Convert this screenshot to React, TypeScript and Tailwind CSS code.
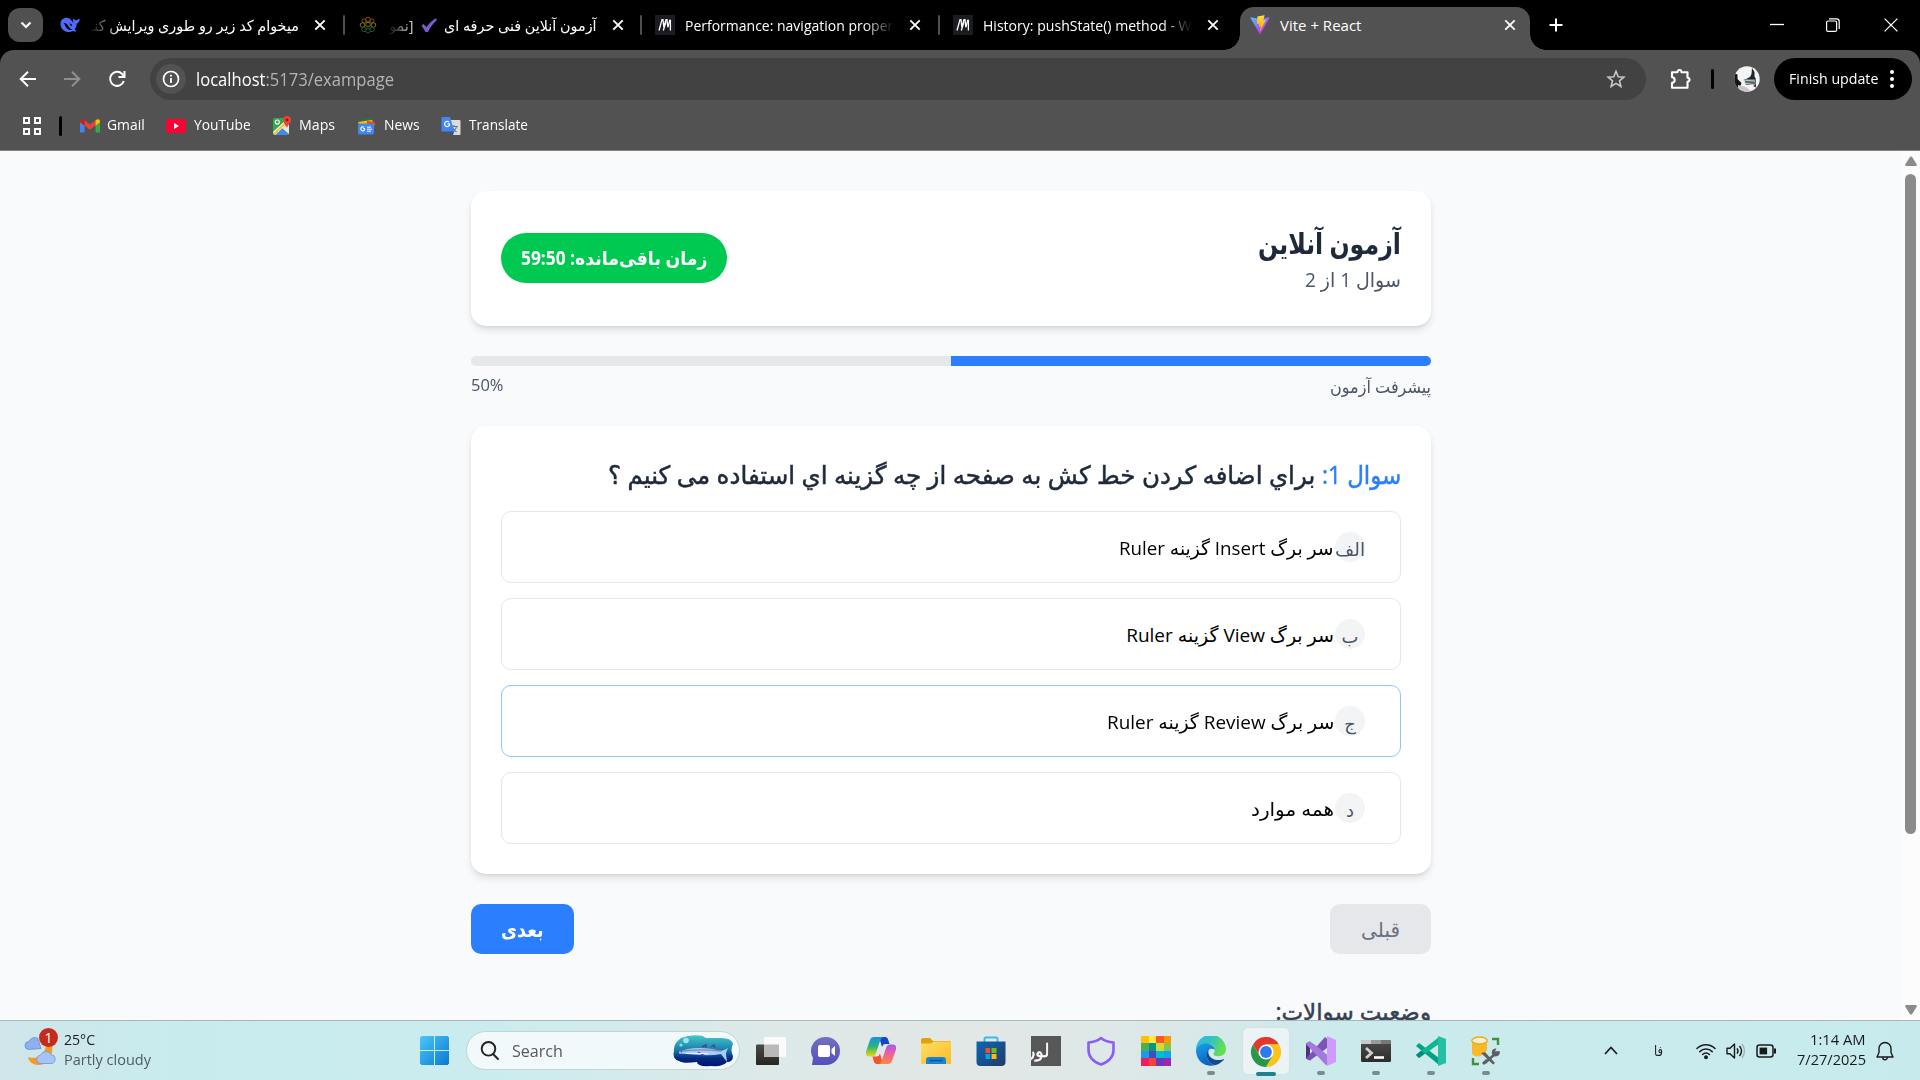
import { useLayoutEffect, useRef, type ReactNode } from "react";

/** Single line of text that is condensed or stretched to the width of its box. */
function Fit({ className = "", children, rtl = false }: { className?: string; children: ReactNode; rtl?: boolean }) {
  const outer = useRef<HTMLSpanElement>(null);
  const inner = useRef<HTMLSpanElement>(null);
  useLayoutEffect(() => {
    if (!outer.current || !inner.current) return;
    const ratio = outer.current.offsetWidth / inner.current.offsetWidth;
    inner.current.style.transform = `scaleX(${ratio})`;
  });
  return (
    <span ref={outer} dir={rtl ? "rtl" : "ltr"} className={`flex shrink-0 justify-start ${className}`}>
      <span ref={inner} className={`shrink-0 whitespace-nowrap ${rtl ? "origin-right" : "origin-left"}`}>
        {children}
      </span>
    </span>
  );
}

const Close = ({ className = "" }: { className?: string }) => (
  <svg viewBox="0 0 14 14" className={`h-3.5 w-3.5 shrink-0 ${className}`} stroke="#fff" strokeWidth="1.9" fill="none">
    <path d="M2.3 2.3l9.4 9.4M11.7 2.3l-9.4 9.4" />
  </svg>
);

const DeepSeek = () => (
  <svg viewBox="0 0 20 20" className="h-5 w-5 shrink-0">
    <path d="M.5 9C.5 5 3.400 2.800 6.500 2.800c2 0 3.200.7 4.600 2.300 1.100 1.300 1.700 2.300 2.600 2.800-.8-1.700-.9-3.300-.2-4.700.8 1.500 1.700 2.100 2.800 2 1.100-.1 2-.9 3.300-1.700.3 2.500-.9 4.500-3 5.200.1 2.300-.7 4.100-2 5.600l2 1.700c-1.300.8-2.700.6-3.900.1C8.300 18.600.5 16 .5 9z" fill="#4d6bfe" />
    <path d="M3.500 8c2.300-.3 3.700 1.100 4.800 2.900 1.100 1.900 2 2.900 3.800 3.800-2.700.8-4.900-.5-6-2.400C5.300 10.800 4.800 9.200 3.500 8z" fill="#000" />
    <path d="M9.600 8.600c1.400-.2 2.300.8 2.500 2.100-.8.300-1.200 0-1.700-.5" fill="#000" />
  </svg>
);

const Knot = () => (
  <svg viewBox="0 0 18 18" className="h-[18px] w-5 shrink-0" fill="none" strokeWidth="1">
    <g stroke="#94500f"><circle cx="9" cy="3.500" r="2.300" /><circle cx="5" cy="5" r="2.100" /><circle cx="13" cy="5" r="2.100" /></g>
    <g stroke="#77731c"><circle cx="3.500" cy="9" r="2.300" /><circle cx="14.500" cy="9" r="2.300" /><circle cx="9" cy="8.500" r="2.300" /></g>
    <g stroke="#115c30"><circle cx="5" cy="13.300" r="2.300" /><circle cx="13" cy="13.300" r="2.300" /><circle cx="9" cy="14.700" r="2.300" /></g>
  </svg>
);

const Mdn = () => (
  <svg viewBox="0 0 20 20" className="h-5 w-5 shrink-0">
    <rect width="20" height="20" fill="#1b1b22" />
    <path d="M4 15.500L7 4.700h1l.8 7.500L11 4.700h1l.8 7.500L15 4.700" stroke="#fff" strokeWidth="1.300" fill="none" />
    <path d="M8.300 15.500l2.700-9M15.400 4.700v10.800" stroke="#fff" strokeWidth="1.300" />
  </svg>
);

const Vite = () => (
  <svg viewBox="0 0 410 404" className="h-5 w-5 shrink-0">
    <defs>
      <linearGradient id="v1" x1="6" y1="33" x2="235" y2="344" gradientUnits="userSpaceOnUse"><stop stopColor="#41D1FF" /><stop offset="1" stopColor="#BD34FE" /></linearGradient>
      <linearGradient id="v2" x1="194" y1="9" x2="236" y2="293" gradientUnits="userSpaceOnUse"><stop stopColor="#FFEA83" /><stop offset=".1" stopColor="#FFDD35" /><stop offset="1" stopColor="#FFA800" /></linearGradient>
    </defs>
    <path d="M399.641 59.525L215.643 388.545C211.844 395.338 202.084 395.378 198.228 388.618L10.582 59.556C6.381 52.190 12.680 43.267 21.028 44.759L205.223 77.682C206.398 77.892 207.601 77.890 208.776 77.676L389.119 44.806C397.439 43.289 403.768 52.143 399.641 59.525Z" fill="url(#v1)" />
    <path d="M292.965 1.574L156.801 28.255C154.563 28.694 152.906 30.590 152.771 32.866L144.395 174.330C144.198 177.662 147.258 180.248 150.510 179.498L188.420 170.749C191.967 169.931 195.172 173.055 194.443 176.622L183.180 231.775C182.422 235.487 185.907 238.661 189.532 237.560L212.947 230.446C216.577 229.344 220.065 232.527 219.297 236.242L201.398 322.875C200.278 328.294 207.486 331.249 210.492 326.603L212.500 323.500L323.454 102.072C325.312 98.365 322.108 94.137 318.036 94.923L279.014 102.454C275.347 103.161 272.227 99.746 273.262 96.158L298.731 7.867C299.767 4.273 296.636.855 292.965 1.574Z" fill="url(#v2)" />
  </svg>
);

function Tab({ icon, children, divider = true }: { icon: ReactNode; children: ReactNode; divider?: boolean }) {
  return (
    <div className="flex h-[50px] w-[297.500px] shrink-0 items-center pl-3.5">
      {icon}
      {children}
      <Close className="ml-3.5" />
      {divider && <span className="-mr-px ml-auto h-5 w-0.5 rounded bg-[#4f4f4f]" />}
    </div>
  );
}

function TabStrip() {
  return (
    <div className="flex h-[50px] items-center bg-black pl-2 text-[15px] text-white">
      <div className="flex h-[34px] w-[35px] shrink-0 items-center justify-center rounded-xl bg-[#505050]">
        <svg viewBox="0 0 12 8" className="h-2 w-3" fill="none" stroke="#fff" strokeWidth="2.200"><path d="M1.500 1.500L6 6l4.500-4.500" /></svg>
      </div>
      <div className="w-[3px]" />
      <Tab icon={<DeepSeek />}>
        <span className="ml-[10px] flex w-[209px] justify-end overflow-hidden [mask-image:linear-gradient(to_right,transparent,black_30px)]">
          <Fit rtl className="w-[209px]">میخوام کد زیر رو طوری ویرایش کنـ</Fit>
        </span>
      </Tab>
      <Tab icon={<Knot />}>
        <span dir="rtl" className="ml-[10px] flex w-[209px] items-center gap-[7px] overflow-hidden [mask-image:linear-gradient(to_right,transparent,black_30px)]">
          <Fit rtl className="w-[153px]">آزمون آنلاین فنی حرفه ای</Fit>
          <svg viewBox="0 0 16 16" className="h-4 w-4 shrink-0"><path d="M.5 8.500l2-1.600 3 3.300C8.500 6 11 3.500 15 1.300l.9 1.800C12.500 6 9.500 10 7 15H4.600z" fill="#7e5bd0" /></svg>
          <Fit rtl className="w-[25px]">[نمو</Fit>
        </span>
      </Tab>
      <Tab icon={<Mdn />}>
        <span className="ml-[10px] w-[209px] [mask-image:linear-gradient(to_left,transparent,black_30px)]">
          <Fit className="w-[208px]">Performance: navigation proper</Fit>
        </span>
      </Tab>
      <Tab divider={false} icon={<Mdn />}>
        <span className="ml-[10px] w-[209px] [mask-image:linear-gradient(to_left,transparent,black_30px)]">
          <Fit className="w-[209px]">History: pushState() method - W</Fit>
        </span>
      </Tab>
      <div className="-ml-3 flex h-[50px] shrink-0 items-end">
        <div className="h-4 w-4 bg-[radial-gradient(circle_at_0_0,#000_15.500px,#525252_16px)]" />
        <div className="flex h-[43px] w-[290px] items-start rounded-t-[14px] bg-[#525252] pl-2.5">
          <div className="flex h-9 w-full items-center">
            <Vite />
            <Fit className="ml-2.5 w-[81px]">Vite + React</Fit>
            <Close className="ml-[142px]" />
          </div>
        </div>
        <div className="h-4 w-4 bg-[radial-gradient(circle_at_100%_0,#000_15.500px,#525252_16px)]" />
      </div>
      <svg viewBox="0 0 14 14" className="ml-[3px] h-3.5 w-3.5 shrink-0" stroke="#fff" strokeWidth="2"><path d="M7 .5v13M.5 7h13" /></svg>
      <div className="ml-auto flex items-center pr-[22px]">
        <svg viewBox="0 0 14 14" className="h-3.5 w-3.5" stroke="#fff"><path d="M0 6.500h14" strokeWidth="1.300" /></svg>
        <svg viewBox="0 0 14 14" className="ml-[42px] h-3.5 w-3.5" stroke="#fff" fill="none"><rect x=".6" y="3" width="10" height="10.400" rx="1.500" strokeWidth="1.200" /><path d="M3 .8h7.500a2.700 2.700 0 0 1 2.700 2.700V11" strokeWidth="1.200" /></svg>
        <svg viewBox="0 0 14 14" className="ml-11 h-3.5 w-3.5" stroke="#fff"><path d="M.6.6l12.800 12.800M13.400.6L.6 13.400" strokeWidth="1.300" /></svg>
      </div>
    </div>
  );
}

function Avatar() {
  return (
    <svg viewBox="0 0 26 26" className="ml-5 h-[26px] w-[26px] shrink-0">
      <defs><clipPath id="av"><circle cx="13" cy="13" r="12.700" /></clipPath></defs>
      <g clipPath="url(#av)">
        <rect width="26" height="26" fill="#f4f4f4" />
        <path d="M0 7l3.500 1.500V13l4 4-2.500 7H0z" fill="#151515" />
        <path d="M18 2l2.500 4v4.500l1.500 2.500H12l4-2 1.500-3z" fill="#20262b" />
        <path d="M10 13h12v6H12z" fill="#5e6b6c" />
        <path d="M9 14l12 1M10 17l11 2" stroke="#c3d0d0" strokeWidth="1" />
        <path d="M4 19l8 2 6 5H4z" fill="#c9c3cb" />
        <path d="M19 20l3-1.500v3z" fill="#2a2a2a" />
      </g>
    </svg>
  );
}

function Toolbar() {
  return (
    <div className="flex h-[58px] items-center rounded-t-[14px] bg-[#525252] pl-[19px] text-white">
      <svg viewBox="0 0 18 18" className="h-[18px] w-[18px]" fill="none" stroke="#fff" strokeWidth="2"><path d="M17 9H2M9 1.700L1.700 9 9 16.300" /></svg>
      <svg viewBox="0 0 18 18" className="ml-[26px] h-[18px] w-[18px]" fill="none" stroke="#8f8f8f" strokeWidth="2"><path d="M1 9h15M9 1.700L16.300 9 9 16.300" /></svg>
      <svg viewBox="0 0 18 18" className="ml-[27px] h-[18px] w-[18px]" fill="none" stroke="#fff" strokeWidth="2"><path d="M15.800 11a7 7 0 1 1-1.600-7l2.300 2.500" /><path d="M16.500 1v6h-6" /></svg>
      <div className="ml-6 flex h-[42px] w-[1496px] shrink-0 items-center rounded-full bg-[#424242] pl-1.5">
        <span className="flex h-[30px] w-[30px] items-center justify-center rounded-full bg-[#525252]">
          <svg viewBox="0 0 18 18" className="h-[18px] w-[18px]" fill="none" stroke="#fff"><circle cx="9" cy="9" r="7.500" strokeWidth="1.700" /><path d="M9 8v5M9 4.800v1.700" strokeWidth="1.800" /></svg>
        </span>
        <Fit className="ml-2.5 w-[198px] text-[18px]">localhost<span className="text-[#b4b4b4]">:5173/exampage</span></Fit>
        <svg viewBox="0 0 20 20" className="mr-5 ml-auto h-5 w-5" fill="none" stroke="#c7c7c7" strokeWidth="1.600" strokeLinejoin="miter"><path d="M10 2.300l2.200 5.400 5.700.4-4.400 3.700 1.400 5.700-4.900-3.100-4.900 3.100 1.400-5.700-4.400-3.700 5.700-.4z" /></svg>
      </div>
      <svg viewBox="0 0 22 22" className="ml-6 h-[22px] w-[22px] shrink-0" fill="none" stroke="#fff" strokeWidth="2.100" strokeLinejoin="round"><path d="M2 4.200h5.500c.2-3 3.800-3 4 0h6V9.800c2.700.3 2.700 3.600 0 3.900v6.100H2v-5c3.600-.2 3.600-5.300 0-5.500z" /></svg>
      <span className="ml-[19px] h-5 w-[3px] shrink-0 rounded bg-black" />
      <Avatar />
      <div className="ml-3.5 flex h-[42px] w-[138px] shrink-0 items-center rounded-full bg-black pl-[15px]">
        <Fit className="w-[89px] pb-0.5 text-[15px]">Finish update</Fit>
        <svg viewBox="0 0 6 20" className="ml-[11px] h-5 w-1.5" fill="#fff"><circle cx="3" cy="3" r="2" /><circle cx="3" cy="10" r="2" /><circle cx="3" cy="17" r="2" /></svg>
      </div>
    </div>
  );
}

function Bookmarks() {
  return (
    <div className="flex h-[43px] items-center border-b border-[#858282] bg-[#525252] pb-[7px] pl-[23px] text-[15px] text-white">
      <svg viewBox="0 0 18 18" className="h-[18px] w-[18px]" fill="none" stroke="#fff" strokeWidth="2"><rect x="1" y="1" width="5" height="5" /><rect x="12" y="1" width="5" height="5" /><rect x="1" y="12" width="5" height="5" /><rect x="12" y="12" width="5" height="5" /></svg>
      <span className="ml-[18px] h-5 w-[3px] rounded bg-black" />
      <svg viewBox="0 0 20 16" className="ml-[18px] h-4 w-5">
        <path d="M0 2v12.500h4.500V7z" fill="#4285f4" /><path d="M20 2v12.500h-4.500V7z" fill="#34a853" />
        <path d="M4.500 7.500V2.300L10 6.500l5.500-4.200v5.200L10 11.700z" fill="#ea4335" />
        <path d="M15.500 2.300C17.500.7 20 .8 20 3.500v.8l-4.500 3.400z" fill="#fbbc04" /><path d="M4.500 2.300C2.500.7 0 .8 0 3.500v.8l4.500 3.400z" fill="#c5221f" />
      </svg>
      <Fit className="ml-[7px] w-[38px] pb-0.5">Gmail</Fit>
      <svg viewBox="0 0 20 14" className="ml-[21px] h-3.5 w-5"><rect width="20" height="14" rx="3" fill="#f03" /><path d="M8 4v6l5-3z" fill="#fff" /></svg>
      <Fit className="ml-2 w-[57px] pb-0.5">YouTube</Fit>
      <svg viewBox="0 0 18 20" className="ml-[22px] h-5 w-[18px]">
        <rect x="0" y="2" width="16" height="17" rx="1.500" fill="#34a853" /><path d="M16 8v10l-7-6z" fill="#e8e8e8" /><path d="M2 19L8.500 12l7 7z" fill="#4285f4" />
        <path d="M0 16L14 3l2 3L2 19z" fill="#fff" /><path d="M0 17.500L13 5l1.500 1.500L1.500 19z" fill="#fbc02d" /><circle cx="4.300" cy="6" r="2" fill="none" stroke="#fff" strokeWidth="1.100" />
        <path d="M14 0a4 4 0 0 1 4 4c0 3-3 4.500-4 8-1-3.500-4-5-4-8a4 4 0 0 1 4-4z" fill="#ea4335" /><circle cx="14" cy="4" r="1.400" fill="#8c1b12" />
      </svg>
      <Fit className="ml-2 w-[36px] pb-0.5">Maps</Fit>
      <svg viewBox="0 0 18 18" className="ml-[22px] h-[18px] w-[18px]">
        <path d="M4 3l10-2v8H4z" fill="#188038" /><path d="M1 5l14-2 3 5-14 4z" fill="#fbbc04" /><path d="M10 4l8 1-1 6-7-1z" fill="#ea4335" />
        <rect x="1" y="6.500" width="16" height="11" rx="1.500" fill="#4285f4" /><path d="M8 11.500H6.200M7.800 12a2 2 0 1 1-.7-1.700" stroke="#fff" strokeWidth="1.100" fill="none" /><path d="M10 10.200h4M10 12.200h5M10 14.200h4" stroke="#fff" strokeWidth="1" />
      </svg>
      <Fit className="ml-[9px] w-[36px] pb-0.5">News</Fit>
      <svg viewBox="0 0 20 20" className="ml-[21px] h-5 w-5">
        <path d="M7 4h11.500a1 1 0 0 1 1 1v13a1 1 0 0 1-1 1h-6z" fill="#dcdcdc" /><path d="M9 10.500h8M13 9v1.500M15.500 10.500c-.5 3-2.500 4.500-4.500 5.500M11.500 12l4 4" stroke="#607d8b" strokeWidth="1.100" fill="none" />
        <path d="M1.500 1H9l4.500 14.500H1.500a1 1 0 0 1-1-1V2a1 1 0 0 1 1-1z" fill="#4285f4" /><path d="M9.500 15.500h4l-1.800 3.300z" fill="#1a56c4" /><path d="M9 7.800H6.500M8.800 8a2.600 2.600 0 1 1-.8-1.900" stroke="#fff" strokeWidth="1.200" fill="none" />
      </svg>
      <Fit className="ml-2 w-[59px] pb-0.5">Translate</Fit>
    </div>
  );
}

function Option({ mark, active = false, children }: { mark: string; active?: boolean; children: ReactNode }) {
  return (
    <div dir="rtl" className={`flex h-[72px] items-center rounded-[10px] border pr-[35px] text-[19px] ${active ? "border-[#8ec5ff]" : "border-gray-200"}`}>
      <span className="flex h-[30px] w-[30px] items-center justify-center rounded-full bg-gray-100 pt-1 text-[18px] text-gray-600">
        {mark === "الف" ? <Fit rtl className="w-[30px]">{mark}</Fit> : mark}
      </span>
      <span className="mr-px pt-[3px] text-black">{children}</span>
    </div>
  );
}

function Exam() {
  return (
    <div className="flex h-[869px] overflow-hidden bg-[#f9fafb]">
      <main className="ml-[471px] w-[960px] shrink-0 pt-10">
        <section dir="rtl" className="flex h-[135px] items-center justify-between rounded-[15px] bg-white px-[30px] shadow-[0_5px_8px_-1px_rgba(0,0,0,0.1),0_2px_5px_-2px_rgba(0,0,0,0.12)]">
          <div>
            <h1 className="flex h-[43px] items-center text-[29px] font-bold text-gray-800"><Fit rtl className="w-[143px]">آزمون آنلاین</Fit></h1>
            <p className="flex h-[32px] items-center text-[20px] text-gray-600"><Fit rtl className="w-[96px]">سوال 1 از 2</Fit></p>
          </div>
          <div className="mb-0.5 flex h-[50px] w-[226px] items-center justify-center rounded-full bg-[#00c951] pt-0.5 text-[19px] font-bold text-white">
            <Fit rtl className="w-[186px]">زمان باقی‌مانده: 59:50</Fit>
          </div>
        </section>

        <div dir="rtl" className="mt-[30px] h-2.5 overflow-hidden rounded-full bg-gray-200"><div className="h-full w-1/2 bg-[#2b7fff]" /></div>
        <div dir="rtl" className="mt-[5px] flex h-[30px] items-center justify-between text-gray-600">
          <Fit rtl className="w-[101px] text-[17.500px]">پیشرفت آزمون</Fit>
          <Fit className="w-[33px] pb-0.5 text-[17px]">50%</Fit>
        </div>

        <section dir="rtl" className="mt-[25px] h-[448px] rounded-[15px] bg-white px-[30px] shadow-[0_5px_8px_-1px_rgba(0,0,0,0.1),0_2px_5px_-2px_rgba(0,0,0,0.12)]">
          <h2 className="flex h-[85px] items-center pt-[13px] text-[25px] font-medium text-gray-800 [-webkit-text-stroke:0.5px]">
            <Fit rtl className="w-[79px] text-[#2b7fff]">سوال 1:</Fit>
            <Fit rtl className="mr-[7px] w-[707px]">براي اضافه کردن خط کش به صفحه از چه گزينه اي استفاده می کنیم ؟</Fit>
          </h2>
          <div className="flex flex-col gap-[15px]">
            <Option mark="الف"><Fit rtl className="w-[215px]">سر برگ Insert گزینه Ruler</Fit></Option>
            <Option mark="ب"><Fit rtl className="w-[208px]">سر برگ View گزینه Ruler</Fit></Option>
            <Option mark="ج" active><Fit rtl className="w-[227px]">سر برگ Review گزینه Ruler</Fit></Option>
            <Option mark="د"><Fit rtl className="w-[83px]">همه موارد</Fit></Option>
          </div>
        </section>

        <div dir="rtl" className="mt-[30px] flex justify-between text-[20px]">
          <button className="flex h-[50px] w-[101px] items-center justify-center rounded-[10px] bg-gray-200 pt-0.5 text-gray-500"><Fit rtl className="w-[39px]">قبلی</Fit></button>
          <button className="flex h-[50px] w-[103px] items-center justify-center rounded-[10px] bg-[#2b7fff] pt-0.5 font-bold text-white"><Fit rtl className="w-[43px]">بعدی</Fit></button>
        </div>
        <h3 dir="rtl" className="mt-[40px] text-[23px] font-medium text-gray-700 [-webkit-text-stroke:0.5px]"><Fit rtl className="w-[156px]">وضعیت سوالات:</Fit></h3>
      </main>
      <div className="ml-auto flex w-[19px] shrink-0 flex-col items-center bg-[#fcfcfc] py-[5px]">
        <svg viewBox="0 0 12 10" className="h-2.5 w-3" fill="#8b8b8b"><path d="M5 .8Q6 0 7 .8L11.800 8.500Q12 10 10.800 10H1.200Q0 10 .2 8.500z" /></svg>
        <div className="mt-2 h-[660px] w-[11px] rounded-full bg-[#8b8b8b]" />
        <svg viewBox="0 0 12 10" className="mt-auto h-2.5 w-3" fill="#8b8b8b"><path d="M5 9.200Q6 10 7 9.200L11.800 1.500Q12 0 10.800 0H1.200Q0 0 .2 1.500z" /></svg>
      </div>
    </div>
  );
}

const mosaic = ["#ffc107", "#ffeb3b", "#ff5722", "#ff9800", "#4caf50", "#009688", "#cddc39", "#8bc34a", "#2196f3", "#3f51b5", "#00bcd4", "#03a9f4", "#e91e63", "#f44336", "#673ab7", "#9c27b0"];

function TaskIcon({ children, state = "none" }: { children: ReactNode; state?: "none" | "open" | "focus" }) {
  return (
    <div className={`flex h-12 w-12 shrink-0 flex-col items-center rounded-md pt-[9px] ${state === "focus" ? "border border-[#d5e2e3] bg-[#eaf4f6] pt-2" : ""}`}>
      <div className="h-[30px] w-[30px]">{children}</div>
      {state === "open" && <span className="mt-[5px] h-1 w-2 rounded-full bg-[#7b8c90]" />}
      {state === "focus" && <span className="mt-[5px] h-1 w-5 shrink-0 rounded-full bg-[#21808f]" />}
    </div>
  );
}

function Taskbar() {
  return (
    <div className="flex h-[60px] items-center border-t border-[#a6b8bb] bg-[linear-gradient(90deg,#cfe5e9_0px,#c8ecee_180px,#cbecee_500px,#dce9e9_740px,#e2e8e6_960px,#dce8e8_1160px,#cbeaec_1340px,#c7ebed_1920px)] pl-6 text-[#1b1b1b]">
      <div className="relative h-[50px] w-[35px] shrink-0">
        <svg viewBox="0 0 35 50" className="h-[50px] w-[35px]">
          <path d="M5 23.500a4 4 0 0 1 0-8 6 6 0 0 1 9-3l3 10z" fill="#8db0ee" stroke="#5d86d6" strokeWidth=".7" />
          <path d="M28 18c2 9-3 21-13 21-6 0-10-3-11-8 9 3 17-2 18-12z" fill="#f59a23" />
          <path d="M16 37.500a4.200 4.200 0 0 1 .5-8.300 6 6 0 0 1 11-.2c5 0 5 8.500-.3 8.500z" fill="#a8c4f6" stroke="#6e92dd" strokeWidth=".8" />
        </svg>
        <span className="absolute top-[2px] left-[15px] flex h-[19px] w-[19px] items-center justify-center rounded-full bg-[#c42b1c] text-[14px] text-white">1</span>
      </div>
      <div className="mb-1 ml-[5px] text-[15px] leading-5">
        <Fit className="w-[31px]">25°C</Fit>
        <Fit className="w-[87px] text-[#4f5c5e]">Partly cloudy</Fit>
      </div>

      <svg viewBox="0 0 29 29" className="ml-[269px] h-[29px] w-[29px] shrink-0">
        <defs><linearGradient id="win" x1="0" y1="0" x2="1" y2="1" gradientUnits="objectBoundingBox"><stop stopColor="#4cc7fb" /><stop offset="1" stopColor="#0a78d4" /></linearGradient></defs>
        <path d="M1.500 0H14v14H0V1.500zM15 0h12.500L29 1.500V14H15zM0 15h14v14H1.500L0 27.500zM15 15h14v12.500L27.500 29H15z" fill="url(#win)" />
      </svg>
      <div className="ml-[17px] flex h-[39px] w-[274px] shrink-0 items-center rounded-full border border-[#c4d3d5] bg-[#f1f9fa] pl-[13px]">
        <svg viewBox="0 0 19 19" className="h-[19px] w-[19px]" fill="none" stroke="#222" strokeWidth="1.900" strokeLinecap="round"><circle cx="8.500" cy="7.800" r="6.800" /><path d="M13 13l5 5" /></svg>
        <Fit className="ml-[13px] w-[51px] text-[17px] text-[#57595a]">Search</Fit>
        <svg viewBox="0 0 61 32" className="mr-[5px] ml-auto h-8 w-[61px]">
          <defs><linearGradient id="sea" x1="0" y1="0" x2="0" y2="1"><stop stopColor="#45c8ce" /><stop offset=".45" stopColor="#1b82ad" /><stop offset=".75" stopColor="#04287f" /><stop offset="1" stopColor="#02176e" /></linearGradient></defs>
          <path d="M8 3Q18-1 30 1q1 2 6 2h12q11 0 12 6-3 6 0 12 0 6-6 6-4 5-16 4-14 1-14-4-14 2-18-1Q-1 24 1 16q-1-7 7-13z" fill="url(#sea)" />
          <circle cx="13" cy="5.500" r="2.800" fill="#9be7ec" /><circle cx="8" cy="10" r="1.600" fill="#8adfe6" />
          <path d="M6 17q8-4 20-4t22 3q4-1 7-3-2 4-2 6l1 8-6-8q-10 2-20 1t-22-1.500z" fill="#a9cdf0" /><path d="M6 16.500q18-3 42-.5" stroke="#7f86c8" strokeWidth="1.300" fill="none" /><path d="M29 12l4-2v3M38 12l3-2 1 3M25 17l7 4M8 16.500h1" stroke="#45468a" strokeWidth="1.400" fill="none" /><path d="M13 18.500h22" stroke="#eaf5ff" strokeWidth="1" />
        </svg>
      </div>

      <div className="ml-[7px] flex gap-[7px]">
        <TaskIcon>
          <svg viewBox="0 0 30 30"><defs><linearGradient id="tv" x1="0" y1="0" x2="0" y2="1"><stop stopColor="#4a4a48" /><stop offset="1" stopColor="#262623" /></linearGradient></defs><rect x="0" y="8.500" width="23" height="20.500" rx="1" fill="url(#tv)" /><rect x="8" y="1" width="22" height="20" rx="1" fill="#fafafa" /><rect x="8" y="8.500" width="15" height="12.500" fill="#b9b9b8" /></svg>
        </TaskIcon>
        <TaskIcon>
          <svg viewBox="0 0 30 30"><defs><linearGradient id="ch" x1="0" y1="0" x2="0" y2="1"><stop stopColor="#756ec2" /><stop offset="1" stopColor="#5450bd" /></linearGradient></defs><path d="M15 1a14 14 0 1 1 0 28H1l1-7A14 14 0 0 1 15 1z" fill="url(#ch)" /><rect x="7" y="9" width="12" height="12" rx="2" fill="#fff" /><path d="M20.500 13l3.500-3v10l-3.500-3z" fill="#fff" /></svg>
        </TaskIcon>
        <TaskIcon>
          <svg viewBox="0 0 30 30">
            <defs>
              <linearGradient id="c1" x1="0" y1="0" x2="0" y2="1"><stop stopColor="#1b8cf0" /><stop offset=".5" stopColor="#2bb673" /><stop offset="1" stopColor="#f5d90a" /></linearGradient>
              <linearGradient id="c2" x1="0" y1="0" x2="0" y2="1"><stop stopColor="#a35cf0" /><stop offset=".5" stopColor="#f0609c" /><stop offset="1" stopColor="#fb8a3c" /></linearGradient>
            </defs>
            <path d="M13 1h6q2.500 0 3.300 3L23.500 8H19q-2 0-3 3z" fill="#1446c8" />
            <path d="M8 1h9q-2 1-3 4l-4 12q-1 3.500-4 3.500H3q-4 0-3-5L4 4q1-3 4-3z" fill="url(#c1)" />
            <path d="M17 28h-6q-2.500 0-3.300-3L6.500 20.500H11q2 0 3-3z" fill="#f2552c" />
            <path d="M22 28h-9q2-1 3-4l4-12q1-3.500 4-3.500h3q4 0 3 5L26 25q-1 3-4 3z" fill="url(#c2)" />
          </svg>
        </TaskIcon>
        <TaskIcon>
          <svg viewBox="0 0 30 30"><defs><linearGradient id="fo" x1="0" y1="0" x2="1" y2="1"><stop stopColor="#ffdd67" /><stop offset="1" stopColor="#fbbd22" /></linearGradient></defs><path d="M0 4q0-2 2-2h7l3 3h16q2 0 2 2v6H0z" fill="#e0a10a" /><path d="M0 7.500h10l3-2h15q2 0 2 2V28H0z" fill="url(#fo)" /><path d="M5 28v-4q0-3 3-3h14q3 0 3 3v4z" fill="#1784d8" /><path d="M8.500 24.500h13" stroke="#0b559b" strokeWidth="1.500" /></svg>
        </TaskIcon>
        <TaskIcon>
          <svg viewBox="0 0 30 30"><defs><linearGradient id="st" x1="0" y1="0" x2="1" y2="1"><stop stopColor="#0c67b8" /><stop offset="1" stopColor="#233b68" /></linearGradient></defs><path d="M8.500 7V3q0-1.500 1.500-1.500h10q1.500 0 1.500 1.500v4" fill="none" stroke="#35bdf2" strokeWidth="2" /><path d="M.5 5.500h29V26q0 4-4 4h-21q-4 0-4-4z" fill="url(#st)" /><path d="M9.500 12H14v5H9.500z" fill="#f25022" /><path d="M15.500 12H20.500v5h-5z" fill="#7fba00" /><path d="M9.500 18H14v5H9.500z" fill="#00a4ef" /><path d="M15.500 18h5v5h-5z" fill="#ffb900" /></svg>
        </TaskIcon>
        <TaskIcon>
          <div dir="rtl" className="flex h-[30px] w-[30px] items-center overflow-hidden bg-[#575757] pr-3 text-[18px] font-medium text-white [-webkit-text-stroke:0.4px]"><Fit rtl className="w-[22px]">لور</Fit></div>
        </TaskIcon>
        <TaskIcon>
          <svg viewBox="0 0 30 30"><path d="M15 2q5 4 12.500 4.500V14q0 10-12.500 14.500Q2.500 24 2.500 14V6.500Q10 6 15 2z" fill="none" stroke="#8b5cf6" strokeWidth="2.600" strokeLinejoin="round" /></svg>
        </TaskIcon>
        <TaskIcon>
          <div className="grid h-[30px] w-[30px] grid-cols-4">{mosaic.map((c) => <span key={c} style={{ backgroundColor: c }} />)}</div>
        </TaskIcon>
        <TaskIcon state="open">
          <svg viewBox="0 0 30 30">
            <defs>
              <linearGradient id="e1" x1="0" y1="0" x2="1" y2=".4"><stop stopColor="#2fb6ee" /><stop offset=".5" stopColor="#2fc3c8" /><stop offset="1" stopColor="#66e04e" /></linearGradient>
              <linearGradient id="e2" x1="0" y1="0" x2=".4" y2="1"><stop stopColor="#1aa1e6" /><stop offset="1" stopColor="#0a63c4" /></linearGradient>
            </defs>
            <path d="M0 14A15 15 0 0 1 30 13.500c0 4.500-3.500 6.700-7.500 6.700-3 0-5.500-1-5-2.700.5-1 1.300-1.500 1.300-3.500C18.500 9 13 7 8.500 8.500 4 10 1 12 0 14z" fill="url(#e1)" />
            <path d="M0 14.500C1 10 5.500 7 10.500 7.500c5 .3 8.300 3.500 8.300 6.500-4-3-8 0-8 5 0 6 5 10.500 9 10A15 15 0 0 1 0 14.500z" fill="url(#e2)" />
            <path d="M12.500 13.500c-4 5-1 12 5 13 4 .7 8-.5 10.300-2.500.5-.5.2-1-.5-.8-7 2.500-16.500-.5-14.800-9.700z" fill="#124a94" />
            <path d="M10.800 19c0 6 5 10.500 9 10 3-.8 6-3 7.500-5-6 3-14 .5-14.800-5z" fill="#124a94" />
          </svg>
        </TaskIcon>
        <TaskIcon state="focus">
          <svg viewBox="0 0 30 30"><path d="M2 7.500A15 15 0 0 1 28 7.500H15L8.500 18.700z" fill="#e03a2c" /><path d="M28 7.500A15 15 0 0 1 15 30l6.500-11.200L15 7.500z" fill="#fcc419" /><path d="M2 7.500A15 15 0 0 0 15 30l6.500-11.200h-13z" fill="#279847" /><circle cx="15" cy="15" r="7.500" fill="#fff" /><circle cx="15" cy="15" r="5.900" fill="#3079ed" /></svg>
        </TaskIcon>
        <TaskIcon state="open">
          <svg viewBox="0 0 30 30"><path d="M0 7.500L4 5.500v19l-4-2z" fill="#52308a" /><path d="M0 22.500L19 1l4 3.500v6L4 24.500z" fill="#7c54b8" /><path d="M0 7.500l4-2 17 19-.5 5z" fill="#9b72d5" /><path d="M4 5.500l6 4 13 11v5L20 29 0 8z" fill="#a478dc" /><path d="M21 0l9 4v22l-9 4z" fill="#cf9bfb" /></svg>
        </TaskIcon>
        <TaskIcon state="open">
          <svg viewBox="0 0 30 30"><defs><linearGradient id="te" x1="0" y1="0" x2="0" y2="1"><stop stopColor="#4d4d4d" /><stop offset="1" stopColor="#2c2c2c" /></linearGradient></defs><rect y="4" width="30" height="22" rx="1.500" fill="url(#te)" /><path d="M1 4h9v4H0V5z" fill="#c9c9c9" /><path d="M10 4h10v4H10z" fill="#999" /><path d="M20 4h9l1 1v3H20z" fill="#777" /><path d="M5 12l5.500 5L5 22" fill="none" stroke="#cfcfcf" strokeWidth="2.800" /><path d="M13 21.500h10" stroke="#fff" strokeWidth="2.600" /></svg>
        </TaskIcon>
        <TaskIcon state="open">
          <svg viewBox="0 0 30 30"><path d="M0 10l3-3L23 22v7z" fill="#00a383" /><path d="M0 19l3 3L23 8V1z" fill="#10b594" /><path d="M0 19l3 3 6-4.500-4-3z" fill="#008f76" /><path d="M22 0l8 3v24l-8 3z" fill="#26bfa5" /></svg>
        </TaskIcon>
        <TaskIcon state="open">
          <svg viewBox="0 0 30 30"><path d="M1 4v13q0 3.500 8 3.500l7-6V4z" fill="#f9b928" /><ellipse cx="8.500" cy="4.500" rx="7.700" ry="3.500" fill="#fff1d0" stroke="#f2a81a" strokeWidth="1.400" /><path d="M21 3h6v6M2 22v6h6" fill="none" stroke="#3f9340" strokeWidth="2.400" /><path d="M10 17l4-1 10 11-2 1.500z" fill="#5d6062" /><path d="M14 27l11-10" stroke="#5d6062" strokeWidth="2.400" /><path d="M28.500 15a4 4 0 1 1-3-2.500l-1.500 3z" fill="#5d6062" /><path d="M12 28l4-4" stroke="#5d6062" strokeWidth="3" /></svg>
        </TaskIcon>
      </div>

      <div className="ml-auto flex shrink-0 items-center">
        <svg viewBox="0 0 14 9" className="h-[9px] w-3.5" fill="none" stroke="#1a1a1a" strokeWidth="1.700"><path d="M1 8l6-6.500L13 8" /></svg>
        <span dir="rtl" className="ml-9 w-[9px] text-[14px]"><Fit rtl className="w-[9px]">فا</Fit></span>
        <svg viewBox="0 0 20 18" className="ml-[33px] h-[18px] w-5" fill="none" stroke="#1a1a1a" strokeWidth="1.500" strokeLinecap="round"><path d="M1 6.500a12.700 12.700 0 0 1 18 0M3.800 9.600a8.800 8.800 0 0 1 12.400 0M6.600 12.500a4.800 4.800 0 0 1 6.800 0" /><circle cx="10" cy="15.300" r="1.200" fill="#1a1a1a" /></svg>
        <svg viewBox="0 0 20 18" className="ml-2.5 h-[18px] w-5" fill="none" stroke="#1a1a1a" strokeWidth="1.400" strokeLinejoin="round"><path d="M1 6.300h3L8.500 2v14L4 11.700H1z" /><path d="M11 6.300q2 2.700 0 5.400M13.500 4q4 5 0 10" /><path d="M16 2q5 7 0 14" stroke="#a3b4b6" /></svg>
        <svg viewBox="0 0 21 14" className="ml-2.5 h-3.5 w-[21px]" fill="none" stroke="#1a1a1a" strokeWidth="1.500"><rect x="1" y="1" width="16" height="12" rx="2.500" /><rect x="3.600" y="3.600" width="7.500" height="6.800" fill="#1a1a1a" stroke="none" /><path d="M19 4.500v5" strokeWidth="2" /></svg>
        <div className="mb-1 ml-[19px] flex w-[70px] flex-col items-end text-[15px] leading-5">
          <Fit className="w-[56px]">1:14 AM</Fit>
          <Fit className="w-[69px]">7/27/2025</Fit>
        </div>
        <svg viewBox="0 0 18 20" className="mr-[26px] ml-2.5 h-5 w-[18px]" fill="none" stroke="#1a1a1a" strokeWidth="1.400" strokeLinejoin="round"><path d="M9 1.500a6 6 0 0 1 6 6v4l2 4.500H1l2-4.500v-4a6 6 0 0 1 6-6zM6.700 16.500a2.300 2.300 0 0 0 4.600 0" /></svg>
      </div>
    </div>
  );
}

export default function App() {
  return (
    <div className="h-[1080px] w-[1920px] overflow-hidden bg-black font-['Open_Sans','Noto_Sans','DejaVu_Sans',sans-serif]">
      <TabStrip />
      <Toolbar />
      <Bookmarks />
      <Exam />
      <Taskbar />
    </div>
  );
}
